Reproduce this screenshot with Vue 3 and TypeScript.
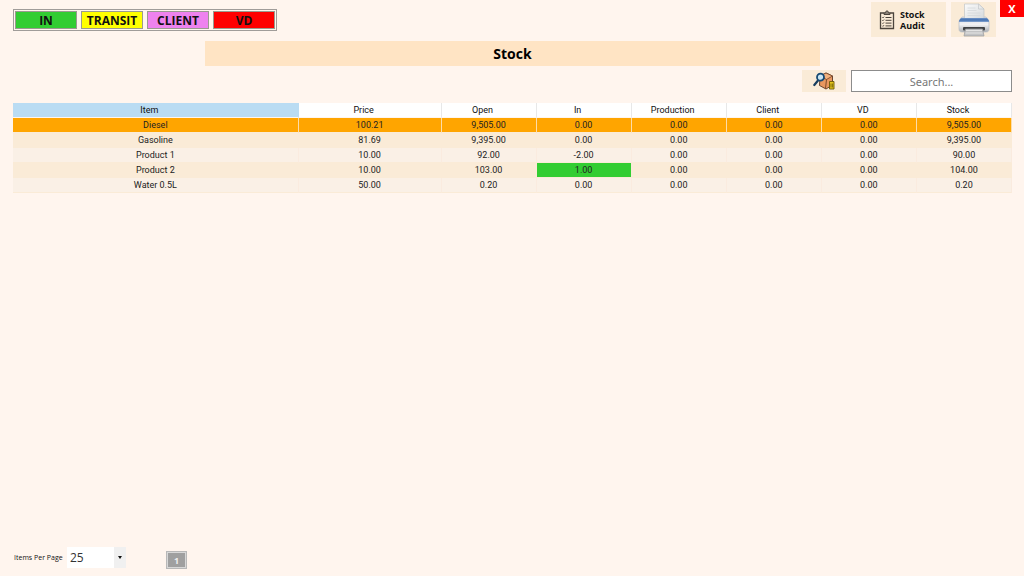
<script setup lang="ts">
import { ref, computed } from 'vue'

interface StockRow {
  item: string
  values: string[]
  highlight?: number
}

const legend = [
  { label: 'IN', kind: 'in' },
  { label: 'TRANSIT', kind: 'transit' },
  { label: 'CLIENT', kind: 'client' },
  { label: 'VD', kind: 'vd' },
]

const columns = ['Item', 'Price', 'Open', 'In', 'Production', 'Client', 'VD', 'Stock']

const rows: StockRow[] = [
  { item: 'Diesel', values: ['100.21', '9,505.00', '0.00', '0.00', '0.00', '0.00', '9,505.00'] },
  { item: 'Gasoline', values: ['81.69', '9,395.00', '0.00', '0.00', '0.00', '0.00', '9,395.00'] },
  { item: 'Product 1', values: ['10.00', '92.00', '-2.00', '0.00', '0.00', '0.00', '90.00'] },
  { item: 'Product 2', values: ['10.00', '103.00', '1.00', '0.00', '0.00', '0.00', '104.00'], highlight: 2 },
  { item: 'Water 0.5L', values: ['50.00', '0.20', '0.00', '0.00', '0.00', '0.00', '0.20'] },
]

const query = ref('')
const perPage = ref(25)
const selected = ref('Diesel')
const visible = computed(() => rows.filter((r) => r.item.toLowerCase().includes(query.value.toLowerCase())))
</script>

<template>
  <div class="page">
    <header class="top">
      <ul class="legend">
        <li v-for="l in legend" :key="l.kind" :class="l.kind">{{ l.label }}</li>
      </ul>
      <div class="actions">
        <button class="audit" type="button">
          <svg width="16" height="20" viewBox="0 0 16 20" fill="none" stroke="#4b443c" aria-hidden="true">
            <path d="M5 3H1.5v15.5h13V3H11" stroke-width="1.3" />
            <path d="M5 4.5V2.8h1.5C6.6 1.5 7 1 8 1s1.400.5 1.500 1.800H11v1.700z" fill="#8b8277" />
            <path d="M6.500 7.500h6M6.500 10.300h6M6.500 13.100h6M6.500 15.900h6" />
            <path d="M3.200 7.300l.7.7 1.200-1.300M3.200 10.100l.7.7 1.200-1.300M3.200 12.900l.7.7 1.200-1.300M3.200 15.700l.7.7 1.200-1.300" stroke-width=".9" />
          </svg>
          <span>Stock<br />Audit</span>
        </button>
        <button class="print" type="button" aria-label="Print">
          <svg width="32" height="34" viewBox="0 0 32 34" aria-hidden="true">
            <defs>
              <linearGradient id="paper" x1="0" y1="0" x2="1" y2="1">
                <stop offset="0" stop-color="#fbfbfb" />
                <stop offset="1" stop-color="#d5d9dc" />
              </linearGradient>
              <linearGradient id="shell" x1="0" y1="0" x2="0" y2="1">
                <stop offset="0" stop-color="#d9dde2" />
                <stop offset=".5" stop-color="#f1f1f3" />
                <stop offset="1" stop-color="#a9adb2" />
              </linearGradient>
              <linearGradient id="band" x1="0" y1="0" x2="0" y2="1">
                <stop offset="0" stop-color="#7396c8" />
                <stop offset=".5" stop-color="#3f6eb0" />
                <stop offset="1" stop-color="#86a5d0" />
              </linearGradient>
            </defs>
            <path d="M4 14h24l3 4v8c0 2-1 3-3 3H4c-2 0-3-1-3-3v-8z" fill="url(#shell)" stroke="#b9bec5" stroke-width=".7" />
            <path d="M6.500 1h14L26 6v10H6.500z" fill="url(#paper)" stroke="#c2c5c7" stroke-width=".7" />
            <path d="M20.500 1v5H26z" fill="#e9ebec" stroke="#bdc1c4" stroke-width=".6" />
            <path d="M9.500 5h8M9.500 7.500h9M9.500 10h13M9.500 12.500h13" stroke="#d4d8da" stroke-width=".8" />
            <path d="M3 15h26l2 2.500v1.500H1v-1.500z" fill="url(#band)" />
            <rect x="5" y="24" width="22" height="3.500" rx="1" fill="#3f4144" />
            <path d="M7.500 26h17l1.500 7H6z" fill="#c3c4c5" stroke="#999b9e" stroke-width=".7" />
            <path d="M8 27.500h16M7.500 30h17" stroke="#e4e4e4" />
          </svg>
        </button>
      </div>
      <button class="close" type="button" aria-label="Close">X</button>
    </header>

    <h1>Stock</h1>

    <div class="tools">
      <button class="find" type="button" aria-label="Find product">
        <svg width="22" height="18" viewBox="0 0 22 18" aria-hidden="true">
          <path d="M7 4l6-3 6.500 3v9l-6.500 4-6.500-3.500z" fill="#e9975f" stroke="#583725" stroke-width=".9" />
          <path d="M7 4l6-3 6.500 3-6 3.500z" fill="#f3b27e" stroke="#704124" stroke-width=".8" />
          <path d="M13.500 7.500l-1 9" fill="none" stroke="#704124" stroke-width=".9" />
          <path d="M5 8.500L1.300 13" stroke="#183d5e" stroke-width="2.200" stroke-linecap="round" />
          <circle cx="7.500" cy="5.200" r="3.500" fill="#c9e5f3" stroke="#174a73" stroke-width="1.800" />
          <path d="M16.500 9.500h4.500v7.500h-4.500z" fill="#e7c51c" stroke="#6b5a08" stroke-width=".9" />
          <path d="M18 11.500v4M19.600 11.500v4" stroke="#6b5a08" stroke-width=".8" />
        </svg>
      </button>
      <input v-model="query" type="text" placeholder="Search..." aria-label="Search" />
    </div>

    <table>
      <colgroup>
        <col class="wide" />
        <col class="mid" />
        <col v-for="n in 6" :key="n" />
      </colgroup>
      <thead>
        <tr>
          <th v-for="c in columns" :key="c" scope="col">{{ c }}</th>
        </tr>
      </thead>
      <tbody>
        <tr v-for="r in visible" :key="r.item" :class="{ selected: r.item === selected }" @click="selected = r.item">
          <td>{{ r.item }}</td>
          <td v-for="(v, i) in r.values" :key="i" :class="{ incoming: r.highlight === i }">{{ v }}</td>
        </tr>
      </tbody>
    </table>

    <footer>
      <label for="per-page">Items Per Page</label>
      <div class="picker">
        <select id="per-page" v-model="perPage">
          <option :value="25">25</option>
          <option :value="50">50</option>
          <option :value="100">100</option>
        </select>
        <span class="arrow"></span>
      </div>
      <button class="pg" type="button" aria-current="page">1</button>
    </footer>
  </div>
</template>

<style>
body {
  margin: 0;
  background: #fff5ee;
}
</style>

<style scoped>
.page {
  box-sizing: border-box;
  min-height: 100vh;
  padding: 0 12px 7px 13px;
  display: flex;
  flex-direction: column;
  background: #fff5ee;
  color: #111;
  font-family: "Open Sans", "Noto Sans", sans-serif;
}
button,
input,
select {
  box-sizing: border-box;
  margin: 0;
  padding: 0;
  border: 0;
  border-radius: 0;
  font-family: inherit;
  color: inherit;
}
svg {
  display: block;
}
.top {
  display: flex;
  align-items: flex-start;
  margin-right: -12px;
}
.legend {
  display: flex;
  gap: 4px;
  margin: 9px auto 0 0;
  padding: 1px;
  border: 1px solid #a09c99;
  background: #fff5ee;
  list-style: none;
}
.legend li {
  box-sizing: border-box;
  width: 62px;
  height: 18px;
  border: 1px solid #9a9a90;
  font-size: 12px;
  line-height: 18px;
  font-weight: 700;
  text-align: center;
}
.in {
  background: #32cd32;
}
.transit {
  background: #ffff00;
}
.client {
  background: #ee82ee;
}
.vd {
  background: #ff0000;
}
.actions {
  display: flex;
  gap: 5px;
  margin: 2px 4px 0 0;
}
.actions button,
.find {
  display: flex;
  align-items: center;
  justify-content: center;
  background: #faebd7;
}
.actions .audit {
  width: 75px;
  height: 35px;
  padding-left: 8px;
  justify-content: flex-start;
  gap: 5px;
  font-size: 9px;
  line-height: 11px;
  font-weight: 700;
}
.actions .print {
  width: 45px;
  height: 35px;
}
.close {
  width: 24px;
  height: 17px;
  background: #ff0000;
  color: #fff;
  font-size: 11px;
  line-height: 17px;
  font-weight: 700;
}
h1 {
  width: 61.6%;
  height: 25px;
  margin: 4px auto 0;
  background: #ffe4c4;
  color: #000;
  font-size: 14px;
  line-height: 26px;
  font-weight: 700;
  text-align: center;
}
.tools {
  display: flex;
  justify-content: flex-end;
  gap: 5px;
  margin-top: 4px;
}
.find {
  width: 44px;
  height: 22px;
}
.tools input {
  width: 161px;
  height: 22px;
  border: 1px solid #8c8c8c;
  background: #fff;
  font-family: "Noto Sans", "Open Sans", sans-serif;
  font-size: 11px;
  text-align: center;
}
.tools input::placeholder {
  color: #777;
  opacity: 1;
}
table {
  width: 100%;
  margin-top: 11px;
  table-layout: fixed;
  border-collapse: separate;
  border-spacing: 0;
}
.wide {
  width: 28.6%;
}
.mid {
  width: 14.3%;
}
th,
td {
  height: 14px;
  padding: 0;
  font-family: Roboto, "Open Sans", sans-serif;
  font-size: 9px;
  line-height: 14px;
  text-align: center;
  white-space: nowrap;
}
th {
  padding-right: 12px;
  border-right: 1px solid #e8e8e8;
  border-bottom: 1px solid #fff5ee;
  background: #fff;
  font-weight: 400;
}
th:first-child {
  border-right-color: #badcf3;
  background: #badcf3;
}
td {
  border-right: 1px solid #faebdf;
  border-bottom: 1px solid #faebd7;
  background: #faf0e6;
  color: #222;
}
tr:nth-child(even) td {
  border-right-color: #faebd7;
  background: #faebd7;
}
tbody tr.selected td {
  border-right-color: #fddca8;
  background: #ffa500;
}
tbody tr:nth-child(n) td.incoming {
  background: #32cd32;
}
footer {
  display: flex;
  align-items: center;
  margin-top: auto;
}
footer label {
  width: 53px;
  padding-left: 1px;
  font-size: 7px;
  line-height: 10px;
  padding-top: 2px;
  white-space: nowrap;
}
.picker {
  position: relative;
}
.picker select {
  display: block;
  width: 59px;
  height: 21px;
  padding-left: 3px;
  appearance: none;
  background: linear-gradient(to left, #f0f0f0 12px, #fff 12px);
  color: #333;
  font-size: 12px;
}
.arrow {
  position: absolute;
  top: 9px;
  right: 4px;
  border: 2px solid transparent;
  border-top: 3px solid #111;
  border-bottom: 0;
  pointer-events: none;
}
.pg {
  width: 21px;
  height: 18px;
  margin: 6px 0 0 40px;
  border: 1px solid #b8b8b8;
  outline: 1px solid #d8d8d8;
  outline-offset: -2px;
  background: #a0a0a0;
  color: #eee;
  font-size: 9px;
  font-weight: 700;
}
</style>
